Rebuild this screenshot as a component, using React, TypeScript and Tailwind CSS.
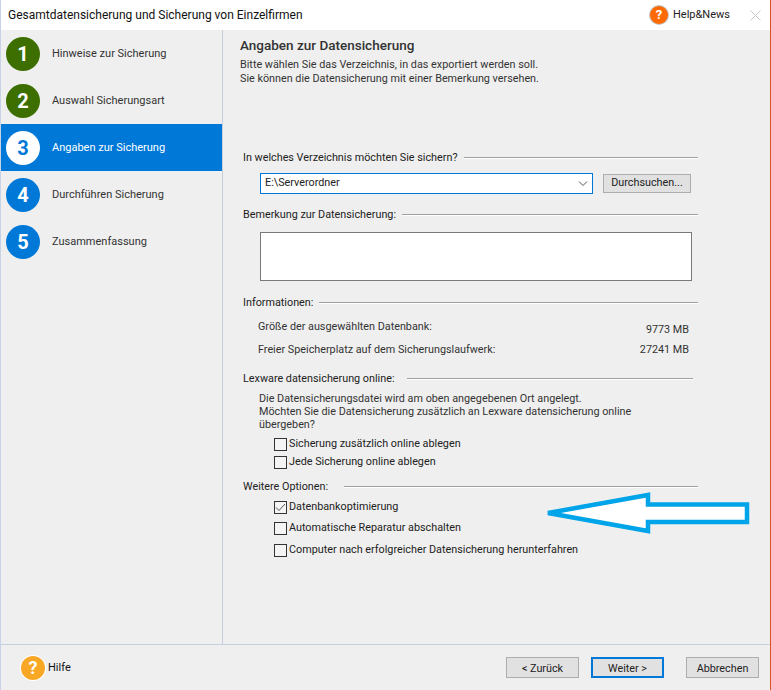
import React from "react";

const font = "font-['Roboto','Liberation_Sans',sans-serif]";

const steps = [
  { n: 1, label: "Hinweise zur Sicherung", state: "done" },
  { n: 2, label: "Auswahl Sicherungsart", state: "done" },
  { n: 3, label: "Angaben zur Sicherung", state: "active" },
  { n: 4, label: "Durchführen Sicherung", state: "todo" },
  { n: 5, label: "Zusammenfassung", state: "todo" },
];

function Step({ n, label, state }: { n: number; label: string; state: string }) {
  const active = state === "active";
  return (
    <div className={`h-[47px] flex items-center pl-[5px] ${active ? "bg-[#0078d7] text-white" : "text-[#333333]"}`}>
      <div
        className={`w-[34px] h-[34px] rounded-full flex items-center justify-center text-[20px] font-bold ${
          active ? "bg-white text-[#0078d7]" : state === "done" ? "bg-[#3c6e00] text-white" : "bg-[#0078d7] text-white"
        }`}
      >
        {n}
      </div>
      <span className="ml-[12px] pt-[2px] text-[11px]">{label}</span>
    </div>
  );
}

function SectionTitle({ label, end = "w-[455px]", gap = "ml-[6px]" }: { label: string; end?: string; gap?: string }) {
  return (
    <div className={`flex items-center h-[16px] ${end}`}>
      <span className="text-[10.8px] text-[#222222] whitespace-nowrap">{label}</span>
      <div className={`flex-1 h-[2px] border-t border-b border-t-[#a0a0a0] border-b-white ${gap}`} />
    </div>
  );
}

function Check({ label, checked = false, className = "" }: { label: string; checked?: boolean; className?: string }) {
  return (
    <div className={`flex items-center h-[14px] ml-[31px] ${className}`}>
      <div className="w-[13px] h-[13px] border border-[#333333] bg-[#f4f4f4] flex items-center justify-center">
        {checked && (
          <svg width="11" height="11" viewBox="0 0 11 11" fill="none">
            <path d="M1 5.5 L4 8.5 L10 2" stroke="#555555" strokeWidth="1" />
          </svg>
        )}
      </div>
      <span className="ml-[2px] pt-[1px] text-[10.8px] text-[#222222] whitespace-nowrap">{label}</span>
    </div>
  );
}

function FootButton({ label, primary = false }: { label: string; primary?: boolean }) {
  return (
    <button
      className={`w-[73px] h-[21px] pt-[3px] text-[10.8px] text-[#222222] flex items-center justify-center ${
        primary ? "border-2 border-[#0078d7] bg-[#e1e1e1]" : "border border-[#adadad] bg-[#e1e1e1]"
      }`}
    >
      {label}
    </button>
  );
}

function HelpIcon({ size, color, ring }: { size: string; color: string; ring: string }) {
  return (
    <div className={`${size} ${color} ${ring} rounded-full text-white font-bold flex items-center justify-center`}>?</div>
  );
}

export default function App() {
  return (
    <div className={`w-[771px] h-[690px] relative flex flex-col bg-[#efefef] border-l border-l-[#c6d3e6] border-r border-r-[#d9541e] overflow-hidden ${font}`}>
      {/* Title bar */}
      <div className="h-[30px] shrink-0 bg-white flex items-center pl-[7px] pr-[9px]">
        <span className="text-[12px] text-[#111111]">Gesamtdatensicherung und Sicherung von Einzelfirmen</span>
        <div className="ml-auto flex items-center">
          <HelpIcon size="w-[18px] h-[18px] text-[13px]" color="bg-[#ff6a00]" ring="ring-1 ring-[#c4c4c4]" />
          <span className="ml-[5px] text-[11px] text-[#222222]">Help&amp;News</span>
          <svg className="ml-[20px]" width="11" height="11" viewBox="0 0 11 11" stroke="#c8c8c8" fill="none">
            <path d="M0.5 0.5 L10.5 10.5 M10.5 0.5 L0.5 10.5" />
          </svg>
        </div>
      </div>

      <div className="flex flex-1 min-h-0">
        {/* Sidebar */}
        <div className="w-[222px] shrink-0 border-r border-[#c5cfe0]">
          {steps.map((s) => (
            <Step key={s.n} {...s} />
          ))}
        </div>

        {/* Content */}
        <div className="flex-1 pl-[17px] pt-[7px]">
          <div className="text-[13.5px] font-medium text-[#333333] leading-[17px]">Angaben zur Datensicherung</div>
          <div className="mt-[4px] text-[10.8px] leading-[14px] text-[#333333]">
            Bitte wählen Sie das Verzeichnis, in das exportiert werden soll.
            <br />
            Sie können die Datensicherung mit einer Bemerkung versehen.
          </div>

          <div className="ml-[3px] mt-[64px]">
            <SectionTitle label="In welches Verzeichnis möchten Sie sichern?" />
            <div className="flex items-center ml-[17px] mt-[7px]">
              <div className="w-[333px] h-[21px] bg-white border border-[#0078d7] flex items-center pl-[4px] pr-[4px] text-[10.8px] text-[#222222]">
                E:\Serverordner
                <svg className="ml-auto" width="10" height="6" viewBox="0 0 10 6" fill="none" stroke="#555555">
                  <path d="M1 0.5 L5 4.5 L9 0.5" />
                </svg>
              </div>
              <button className="ml-[10px] w-[88px] h-[19px] border border-[#adadad] bg-[#e1e1e1] text-[10.8px] text-[#222222] flex items-center justify-center">
                Durchsuchen...
              </button>
            </div>

            <div className="mt-[13px]">
              <SectionTitle label="Bemerkung zur Datensicherung:" />
            </div>
            <div className="ml-[17px] mt-[9px] w-[432px] h-[49px] bg-white border border-[#7a7a7a]" />

            <div className="mt-[14px]">
              <SectionTitle label="Informationen:" />
            </div>
            <div className="ml-[15px] w-[431px] mt-[8px] text-[10.8px] text-[#333333]">
              <div className="flex justify-between h-[23px]">
                <span>Größe der ausgewählten Datenbank:</span>
                <span className="mt-[3px]">9773 MB</span>
              </div>
              <div className="flex justify-between h-[23px]">
                <span>Freier Speicherplatz auf dem Sicherungslaufwerk:</span>
                <span>27241 MB</span>
              </div>
            </div>

            <div className="mt-[6px]">
              <SectionTitle label="Lexware datensicherung online:" end="w-[450px]" gap="ml-[12px]" />
            </div>
            <div className="ml-[16px] mt-[5px] text-[10.8px] leading-[13px] text-[#333333]">
              Die Datensicherungsdatei wird am oben angegebenen Ort angelegt.
              <br />
              Möchten Sie die Datensicherung zusätzlich an Lexware datensicherung online
              <br />
              übergeben?
            </div>
            <Check label="Sicherung zusätzlich online ablegen" className="mt-[6px]" />
            <Check label="Jede Sicherung online ablegen" className="mt-[4px]" />

            <div className="mt-[10px]">
              <SectionTitle label="Weitere Optionen:" gap="ml-[16px]" />
            </div>
            <Check label="Datenbankoptimierung" checked className="mt-[5px]" />
            <Check label="Automatische Reparatur abschalten" className="mt-[7px]" />
            <Check label="Computer nach erfolgreicher Datensicherung herunterfahren" className="mt-[8px]" />
          </div>
        </div>
      </div>

      {/* Footer */}
      <div className="h-[46px] shrink-0 border-t border-[#c5cfe0] flex items-center pl-[20px] pr-[11px]">
        <HelpIcon size="w-[24px] h-[24px] text-[18px]" color="bg-[#f9a825]" ring="ring-1 ring-white" />
        <span className="ml-[3px] pt-[2px] text-[11px] text-[#111111]">Hilfe</span>
        <div className="ml-auto flex items-center">
          <FootButton label="< Zurück" />
          <div className="ml-[12px]"><FootButton label="Weiter >" primary /></div>
          <div className="ml-[22px]"><FootButton label="Abbrechen" /></div>
        </div>
      </div>

      {/* Annotation arrow drawn over the dialog */}
      <svg className="absolute left-[544px] top-[491px]" width="208" height="46" viewBox="0 0 208 46">
        <path
          d="M3 22 L103 4 L103 13.5 L202 13.5 L202 31 L103 31 L103 40 Z"
          fill="#ffffff"
          stroke="#00a4e8"
          strokeWidth="4.5"
        />
      </svg>
    </div>
  );
}
